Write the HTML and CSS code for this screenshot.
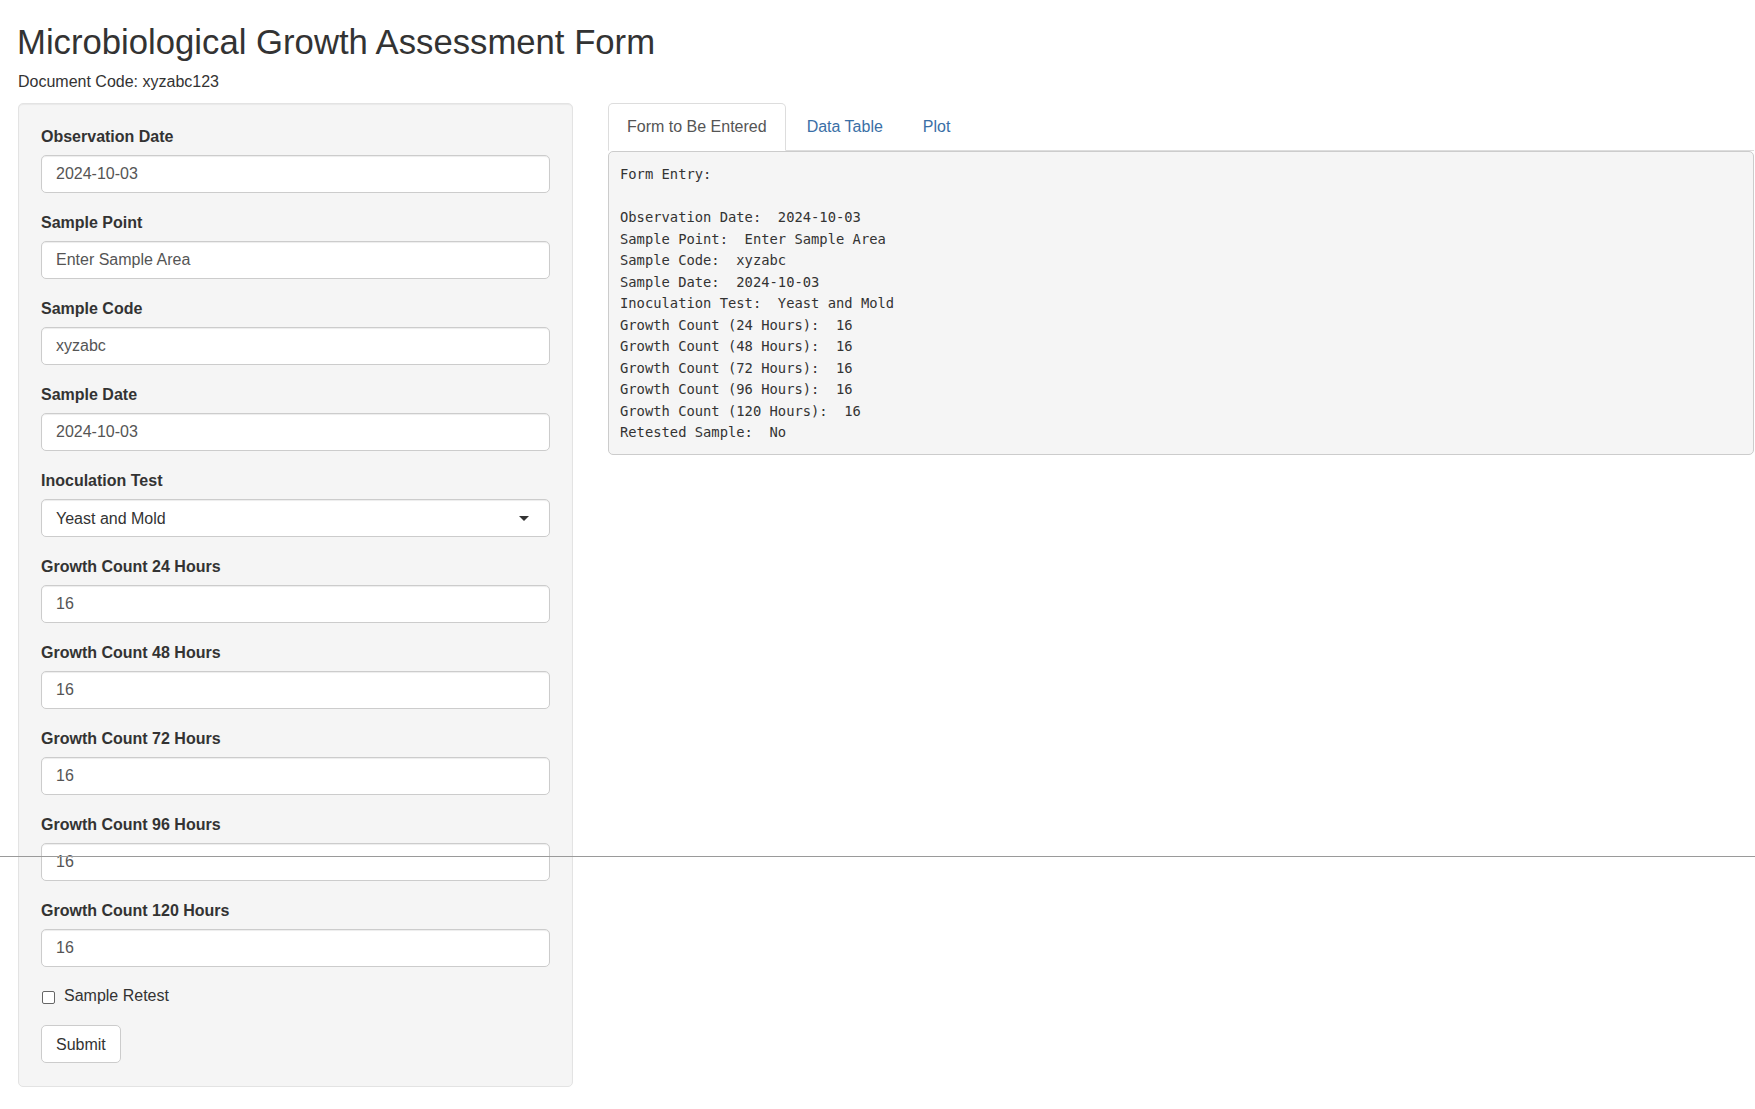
FILE: index.html
```html
<!DOCTYPE html>
<html lang="en">
<head>
<meta charset="utf-8">
<title>Microbiological Growth Assessment Form</title>
<link rel="stylesheet" href="styles.css">
</head>
<body>
<h2 class="title">Microbiological Growth Assessment Form</h2>
<div class="doc-code">Document Code: xyzabc123</div>
<div class="layout">
  <form class="sidebar">
    <div class="field">
      <label class="field-label">Observation Date</label>
      <input class="text-input" type="text" value="2024-10-03">
    </div>
    <div class="field">
      <label class="field-label">Sample Point</label>
      <input class="text-input" type="text" value="Enter Sample Area">
    </div>
    <div class="field">
      <label class="field-label">Sample Code</label>
      <input class="text-input" type="text" value="xyzabc">
    </div>
    <div class="field">
      <label class="field-label">Sample Date</label>
      <input class="text-input" type="text" value="2024-10-03">
    </div>
    <div class="field">
      <label class="field-label">Inoculation Test</label>
      <div class="select-input"><span>Yeast and Mold</span><span class="caret"></span></div>
    </div>
    <div class="field">
      <label class="field-label">Growth Count 24 Hours</label>
      <input class="text-input" type="text" value="16">
    </div>
    <div class="field">
      <label class="field-label">Growth Count 48 Hours</label>
      <input class="text-input" type="text" value="16">
    </div>
    <div class="field">
      <label class="field-label">Growth Count 72 Hours</label>
      <input class="text-input" type="text" value="16">
    </div>
    <div class="field">
      <label class="field-label">Growth Count 96 Hours</label>
      <input class="text-input" type="text" value="16">
    </div>
    <div class="field">
      <label class="field-label">Growth Count 120 Hours</label>
      <input class="text-input" type="text" value="16">
    </div>
    <label class="check-row"><input class="check-box" type="checkbox"><span>Sample Retest</span></label>
    <button class="submit-btn" type="button">Submit</button>
  </form>
  <main class="main">
    <ul class="tabs">
      <li class="tab active">Form to Be Entered</li>
      <li class="tab">Data Table</li>
      <li class="tab">Plot</li>
    </ul>
<pre class="output">Form Entry:

Observation Date:  2024-10-03
Sample Point:  Enter Sample Area
Sample Code:  xyzabc
Sample Date:  2024-10-03
Inoculation Test:  Yeast and Mold
Growth Count (24 Hours):  16
Growth Count (48 Hours):  16
Growth Count (72 Hours):  16
Growth Count (96 Hours):  16
Growth Count (120 Hours):  16
Retested Sample:  No</pre>
  </main>
</div>
<div class="seam"></div>
</body>
</html>
```

FILE: styles.css
```css
* { box-sizing: border-box; }
html, body { margin: 0; }
body {
  position: relative;
  min-height: 1109px;
  padding: 0 1px 0 18px;
  font-family: "Liberation Sans", Arial, sans-serif;
  font-size: 16px;
  line-height: 23px;
  color: #333;
  background: #fff;
}
.title {
  margin: 23px 0 0 -1px;
  font-size: 34.7px;
  font-weight: 400;
  line-height: 38px;
  color: #333;
}
.doc-code { margin-top: 9px; }
.layout {
  display: flex;
  align-items: flex-start;
  gap: 35px;
  margin-top: 10px;
}
.sidebar {
  flex: none;
  width: 555px;
  margin: 0;
  padding: 22px 22px 23px;
  background: #f5f5f5;
  border: 1px solid #e3e3e3;
  border-radius: 5px;
  box-shadow: inset 0 1px 1px rgba(0,0,0,.05);
}
.field { margin-bottom: 19px; }
.field-label {
  display: block;
  margin-bottom: 8px;
  font-weight: 700;
  line-height: 21px;
}
.text-input, .select-input {
  display: block;
  width: 100%;
  height: 38px;
  margin: 0;
  padding: 0 14px;
  font: inherit;
  color: #555;
  background: #fff;
  border: 1px solid #ccc;
  border-radius: 5px;
  box-shadow: inset 0 1px 1px rgba(0,0,0,.075);
  outline: none;
}
.select-input {
  display: flex;
  align-items: center;
  justify-content: space-between;
  color: #333;
  padding-right: 20px;
}
.caret {
  width: 0;
  height: 0;
  border-style: solid;
  border-width: 5px 5px 0 5px;
  border-color: #333 transparent transparent transparent;
}
.check-row {
  display: flex;
  align-items: center;
  gap: 9px;
  height: 23px;
  margin-top: -2px;
  margin-bottom: 18px;
}
.check-box {
  appearance: none;
  -webkit-appearance: none;
  width: 13px;
  height: 13px;
  margin: 3px 0 0 1px;
  background: #fff;
  border: 1px solid #666;
  border-radius: 2px;
}
.submit-btn {
  display: block;
  height: 38px;
  padding: 0 14px;
  font: inherit;
  color: #333;
  background: #fff;
  border: 1px solid #ccc;
  border-radius: 5px;
}
.main { flex: 1; min-width: 0; }
.tabs {
  display: flex;
  margin: 0;
  padding: 0;
  list-style: none;
  border-bottom: 1px solid #ddd;
}
.tab {
  margin: 0 2px -1px 0;
  padding: 10.5px 18px 12.5px;
  line-height: 23px;
  color: #3a6fa6;
  border: 1px solid transparent;
  border-radius: 5px 5px 0 0;
}
.tab.active {
  color: #555;
  background: #fff;
  border-color: #ddd #ddd transparent;
}
.output {
  margin: 0;
  padding: 12px 11px 10px;
  font-family: "DejaVu Sans Mono", monospace;
  font-size: 13.8px;
  line-height: 21.5px;
  color: #333;
  background: #f5f5f5;
  border: 1px solid #ccc;
  border-radius: 5px;
  white-space: pre;
}
.seam {
  position: absolute;
  left: 0;
  right: 0;
  top: 856px;
  height: 1px;
  background: #9a9a9a;
}
```
